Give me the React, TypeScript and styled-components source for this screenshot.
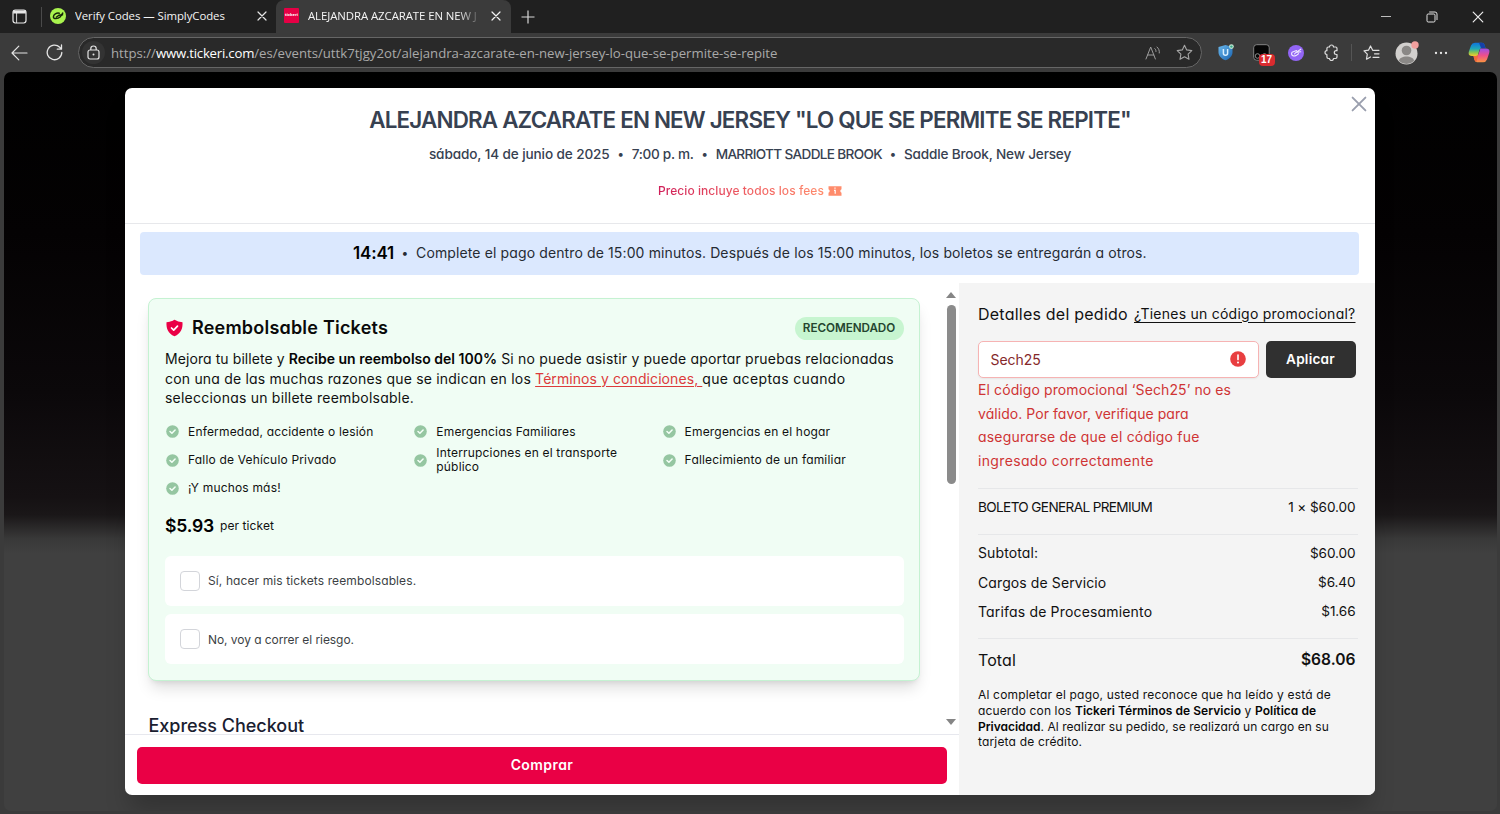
import React from 'react';
import styled, { createGlobalStyle } from 'styled-components';

const GlobalStyle = createGlobalStyle`
  *, *::before, *::after { box-sizing: border-box; }
  html, body { margin: 0; padding: 0; }
  body {
    background: #3b3b3b;
    color: #111;
    font-family: Inter, "Open Sans", sans-serif;
    font-feature-settings: "cv11";
    font-size: 13.6px;
    overflow: hidden;
  }
  svg { display: block; flex: none; }
`;

/* ---------- browser chrome ---------- */

const Browser = styled.div`
  display: flex;
  flex-direction: column;
  width: 1500px;
  height: 814px;
  background: #3b3b3b;
  overflow: hidden;
`;

const TabBar = styled.div`
  display: flex;
  align-items: center;
  height: 33px;
  flex: none;
  background: #202020;
  font-family: "Open Sans", sans-serif;
  color: #f4f4f4;
`;

const PanelButton = styled.div`
  width: 41px;
  padding-left: 12px;
`;

const TabDivider = styled.div`
  width: 1px;
  height: 20px;
  background: #4a4a4a;
`;

const Tab = styled.div<{ $active?: boolean; $width: number; $left: number }>`
  display: flex;
  align-items: center;
  height: 33px;
  width: ${p => p.$width}px;
  padding: 0 ${p => (p.$active ? 10 : 9)}px 2px ${p => p.$left}px;
  border-radius: 8px 8px 0 0;
  background: ${p => (p.$active ? '#3b3b3b' : 'transparent')};
`;

const TabTitle = styled.div<{ $fade?: boolean; $spacing: number }>`
  flex: 1;
  margin-left: 9px;
  overflow: hidden;
  white-space: nowrap;
  font-size: 11.4px;
  line-height: 18px;
  letter-spacing: ${p => p.$spacing}px;
  ${p => p.$fade && 'mask-image: linear-gradient(90deg, #000 150px, transparent 174px);'}
`;

const TickeriFavicon = styled.div`
  width: 15px;
  height: 15px;
  flex: none;
  border-radius: 1px;
  background: #e60045;
  color: #fff;
  font-size: 4px;
  font-weight: 700;
  line-height: 14px;
  text-align: center;
`;

const WindowControls = styled.div`
  display: flex;
  align-items: center;
  margin-left: auto;
  padding-right: 16px;
  gap: 34px;
`;

const Toolbar = styled.div`
  display: flex;
  align-items: center;
  height: 39px;
  flex: none;
  padding-left: 11px;
`;

const NavButtons = styled.div`
  display: flex;
  align-items: center;
  gap: 18px;
  width: 67px;
`;

const AddressBar = styled.div`
  display: flex;
  align-items: center;
  width: 1124px;
  height: 31px;
  padding: 0 8.5px 0 3px;
  border: 1px solid #666;
  border-radius: 16px;
  background: #292929;
  font-family: "Open Sans", sans-serif;
`;

const LockBadge = styled.div`
  display: grid;
  place-items: center;
  width: 23px;
  height: 23px;
  margin-right: 6px;
  border-radius: 50%;
  background: #333;
`;

const Url = styled.div`
  display: flex;
  flex: 1;
  font-size: 13.2px;
  line-height: 20px;
  white-space: nowrap;
  color: #a9a9a9;
`;

const UrlPart = styled.span<{ $host?: boolean; $spacing: number }>`
  letter-spacing: ${p => p.$spacing}px;
  ${p => p.$host && 'color: #fff;'}
`;

const AddressActions = styled.div`
  display: flex;
  align-items: center;
  gap: 15px;
`;

const Extensions = styled.div`
  display: flex;
  align-items: center;
  gap: 18.5px;
  margin-left: 16px;
`;

const ProfileTools = styled.div`
  display: flex;
  align-items: center;
  gap: 15px;
`;

const CopilotSlot = styled.div`
  margin-left: 5px;
`;

const CountedExtension = styled.div`
  position: relative;
`;

const CountBadge = styled.span`
  position: absolute;
  left: 6px;
  top: 10px;
  width: 16px;
  height: 12px;
  border-radius: 4px;
  background: #d92b2f;
  color: #fff;
  font: 700 10px/12px "Liberation Sans", sans-serif;
  text-align: center;
`;

const ToolbarDivider = styled.div`
  width: 1px;
  height: 17px;
  margin: 0 11px;
  background: #555;
`;

/* ---------- page and modal ---------- */

const Viewport = styled.div`
  display: flex;
  justify-content: center;
  align-items: flex-start;
  height: 739px;
  margin: 0 3px 0 4px;
  padding: 16px 1px 0 0;
  border-radius: 7px;
  overflow: hidden;
  background: linear-gradient(180deg, #000 0, #040203 160px, #0b080a 320px, #151113 425px, #1a1718 443px, #393939 467px, #404040 482px, #404040 100%);
`;

const Modal = styled.div`
  position: relative;
  display: flex;
  flex-direction: column;
  width: 1250px;
  height: 707.4px;
  border-radius: 7px;
  overflow: hidden;
  background: #fff;
  box-shadow: 0 20px 25px -5px rgba(0, 0, 0, 0.22);
`;

const CloseButton = styled.button`
  position: absolute;
  top: 8px;
  right: 8px;
  padding: 0;
  border: 0;
  background: none;
`;

const Header = styled.header`
  display: flex;
  flex-direction: column;
  align-items: center;
  height: 136px;
  flex: none;
  padding-top: 16px;
  border-bottom: 1px solid #e7e8eb;
  color: #374151;
  white-space: nowrap;
`;

const Title = styled.h1`
  margin: 0;
  font-size: 22.4px;
  font-weight: 600;
  line-height: 32px;
  letter-spacing: -0.81px;
`;

const Meta = styled.div`
  display: flex;
  margin-top: 8px;
  font-weight: 500;
  line-height: 20px;
`;

const MetaItem = styled.span<{ $spacing: number }>`
  letter-spacing: ${p => p.$spacing}px;
`;

const Dot = styled.span<{ $width: number }>`
  width: ${p => p.$width}px;
  text-align: center;
  font-size: 12px;
`;

const FeeNote = styled.div`
  display: flex;
  align-items: center;
  gap: 4px;
  margin-top: 18px;
  font-size: 12px;
  font-weight: 500;
  line-height: 18px;
  letter-spacing: 0.064px;
`;

const FeeText = styled.span`
  color: transparent;
  background: linear-gradient(90deg, #cf1d58, #f06062 55%, #ff8c6c);
  background-clip: text;
  -webkit-background-clip: text;
`;

const Timer = styled.div`
  display: flex;
  align-items: center;
  justify-content: center;
  height: 43px;
  flex: none;
  margin: 8px 15.6px 8px 15.4px;
  padding-bottom: 2px;
  border-radius: 4px;
  background: #dbe8fe;
  color: #262b33;
  font-size: 14px;
  letter-spacing: 0.122px;
  white-space: nowrap;
`;

const Countdown = styled.span`
  color: #000;
  font-size: 17px;
  font-weight: 600;
  letter-spacing: -0.18px;
`;

const Columns = styled.div`
  display: flex;
  flex: 1;
  min-height: 0;
`;

const Main = styled.main`
  display: flex;
  flex-direction: column;
  width: 834px;
`;

const ScrollRow = styled.div`
  display: flex;
  height: 452px;
  flex: none;
  overflow: hidden;
  border-bottom: 1px solid #e7e8ee;
`;

const ScrollContent = styled.div`
  width: 818px;
  padding: 15px 23px 0;
`;

const Scrollbar = styled.div`
  display: flex;
  flex-direction: column;
  align-items: center;
  width: 16px;
  padding: 9px 0 9px;
`;

const Thumb = styled.div`
  width: 9px;
  height: 179px;
  margin: 7px 0 auto;
  border-radius: 5px;
  background: #8b8b8b;
`;

const RefundCard = styled.section`
  height: 383px;
  padding: 15px 15.5px 0 16px;
  border: 1px solid #c5f2d2;
  border-radius: 8px;
  background: #f0fdf4;
  box-shadow: 0 10px 15px -3px rgba(0, 0, 0, 0.13), 0 4px 6px -4px rgba(0, 0, 0, 0.12);
`;

const CardHead = styled.div`
  display: flex;
  align-items: center;
  height: 28px;
`;

const CardTitle = styled.h2`
  margin: 0 auto 0 9px;
  color: #0a0a0a;
  font-size: 18px;
  font-weight: 600;
  line-height: 26px;
  letter-spacing: 0.21px;
`;

const Pill = styled.span`
  width: 109px;
  height: 23px;
  margin-top: 1px;
  border-radius: 12px;
  background: #c7f5d0;
  color: #24452f;
  font-size: 11.7px;
  font-weight: 600;
  line-height: 23px;
  letter-spacing: -0.06px;
  text-align: center;
`;

const Pitch = styled.p`
  margin: 7px 0 0;
  font-size: 14px;
  line-height: 19.5px;
  white-space: nowrap;
`;

const Line = styled.span<{ $spacing?: number }>`
  display: block;
  letter-spacing: ${p => p.$spacing ?? 0}px;
`;

const Run = styled.span<{ $spacing: number }>`
  letter-spacing: ${p => p.$spacing}px;
`;

const Strong = styled.b<{ $spacing: number }>`
  font-weight: 600;
  color: #050505;
  letter-spacing: ${p => p.$spacing}px;
`;

const TermsLink = styled.a`
  color: #dc3b3b;
  text-decoration: underline;
  text-underline-offset: 2px;
  letter-spacing: 0.08px;
`;

const Reasons = styled.ul`
  display: grid;
  grid-template-columns: repeat(3, 248.3px);
  grid-auto-rows: 28.2px;
  margin: 10.3px 0 0;
  padding: 0;
  list-style: none;
  font-size: 12px;
  line-height: 14px;
  letter-spacing: 0.18px;
`;

const Reason = styled.li`
  display: flex;
  align-items: center;
  gap: 9px;
  padding: 0 20px 0 1px;
`;

const Price = styled.div`
  display: flex;
  align-items: center;
  height: 26px;
  margin-top: 9.7px;
  font-size: 12px;
  letter-spacing: 0.08px;
`;

const Amount = styled.span`
  width: 55px;
  color: #000;
  font-size: 17.6px;
  font-weight: 600;
  letter-spacing: -0.19px;
`;

const Options = styled.div`
  display: flex;
  flex-direction: column;
  gap: 8.5px;
  margin-top: 17.5px;
`;

const Option = styled.label<{ $spacing: number }>`
  display: flex;
  align-items: center;
  gap: 8px;
  height: 50px;
  padding-left: 15px;
  border-radius: 6px;
  background: #fff;
  color: #3c3f44;
  font-size: 12px;
  letter-spacing: ${p => p.$spacing}px;
`;

const CheckBox = styled.span`
  width: 20px;
  height: 20px;
  border: 1px solid #d3d5da;
  border-radius: 4px;
  background: #fff;
`;

const ExpressTitle = styled.h2`
  margin: 32px 0 0 0.5px;
  color: #1a2030;
  font-size: 18px;
  font-weight: 500;
  line-height: 26px;
  letter-spacing: -0.02px;
`;

const Footer = styled.div`
  padding: 12px 12px 0;
`;

const BuyButton = styled.button`
  display: block;
  width: 810px;
  height: 36.5px;
  padding: 0 0 2px;
  border: 0;
  border-radius: 5px;
  background: #ea0045;
  color: #fff;
  font: inherit;
  font-size: 14px;
  font-weight: 600;
  letter-spacing: 0.43px;
`;

/* ---------- order summary ---------- */

const Summary = styled.aside`
  flex: 1;
  padding: 20px 17px 0 19px;
  background: #f4f4f4;
  white-space: nowrap;
`;

const SummaryHead = styled.div`
  display: flex;
  align-items: center;
  justify-content: space-between;
  height: 22px;
  padding-right: 2.5px;
  color: #111;
  font-size: 16px;
  letter-spacing: 0.23px;
`;

const PromoLink = styled.a`
  padding-bottom: 2px;
  font-size: 14px;
  letter-spacing: 0.245px;
  text-decoration: underline;
  text-underline-offset: 2.5px;
`;

const PromoForm = styled.div`
  display: flex;
  gap: 6.5px;
  height: 37px;
  margin-top: 16px;
`;

const PromoField = styled.div`
  display: flex;
  align-items: center;
  justify-content: space-between;
  width: 281px;
  padding: 0 12px 1px 11.5px;
  border: 1px solid #f6b3b3;
  border-radius: 5px;
  background: #fff;
  box-shadow: 0 1px 2px rgba(0, 0, 0, 0.06);
  color: #85282b;
  font-size: 14px;
  letter-spacing: -0.06px;
`;

const ApplyButton = styled.button`
  width: 90px;
  padding: 0 0 2px;
  border: 0;
  border-radius: 5px;
  background: #303030;
  color: #fff;
  font: inherit;
  font-weight: 600;
  letter-spacing: 0.24px;
`;

const PromoError = styled.p`
  margin: 0.3px 0 15.7px;
  color: #cf3434;
  font-size: 14px;
  line-height: 23.45px;
`;

const Rows = styled.div<{ $height: number; $pad: number }>`
  display: flex;
  flex-direction: column;
  height: ${p => p.$height}px;
  padding: ${p => p.$pad}px 2.5px 0 0;
  border-top: 1px solid #e6e7e9;
`;

const SumRow = styled.div`
  display: flex;
  align-items: center;
  justify-content: space-between;
  height: 29.4px;
`;

const Label = styled.span<{ $spacing?: number; $size?: number }>`
  font-size: ${p => p.$size ?? 14}px;
  letter-spacing: ${p => p.$spacing ?? 0.1}px;
`;

const Value = styled.span<{ $total?: boolean }>`
  font-size: ${p => (p.$total ? 15.6 : 13.6)}px;
  font-weight: ${p => (p.$total ? 600 : 400)};
  letter-spacing: ${p => (p.$total ? 0 : -0.1)}px;
`;

const Legal = styled.p`
  margin: 0;
  font-size: 12px;
  line-height: 15.7px;
`;

/* ---------- icons ---------- */

const Cross = ({ size, color, width = 1.2 }: { size: number; color: string; width?: number }) => (
  <svg width={size} height={size} viewBox="0 0 10 10" stroke={color} strokeWidth={width} strokeLinecap="round">
    <path d="M1 1l8 8M9 1L1 9" />
  </svg>
);

const CheckCircle = () => (
  <svg width="13" height="13" viewBox="0 0 13 13">
    <circle cx="6.5" cy="6.5" r="6.3" fill="#95c6a1" />
    <path d="M4 6.5l1.9 1.8L9.1 5" fill="none" stroke="#f5fff8" strokeWidth="1.5" strokeLinecap="round" strokeLinejoin="round" />
  </svg>
);

const reasons = [
  'Enfermedad, accidente o lesión',
  'Emergencias Familiares',
  'Emergencias en el hogar',
  'Fallo de Vehículo Privado',
  'Interrupciones en el transporte público',
  'Fallecimiento de un familiar',
  '¡Y muchos más!',
];

function BrowserTabs() {
  return (
    <TabBar>
      <PanelButton>
        <svg width="15" height="15" viewBox="0 0 15 15" fill="none" stroke="#e8e8e8" strokeWidth="1.2">
          <rect x="1" y="1" width="13" height="13" rx="2.4" />
          <path d="M1.2 3h12.6" strokeWidth="3" />
          <path d="M4.6 4v10" strokeWidth=".9" />
        </svg>
      </PanelButton>
      <TabDivider />
      <Tab $width={234} $left={8}>
        <svg width="16" height="16" viewBox="0 0 16 16">
          <circle cx="8" cy="8" r="8" fill="#a9f34e" />
          <g fill="none" stroke="#16240a" strokeWidth="1.4" strokeLinecap="round">
            <path d="M9.3 5.2C6.5 4.6 3.5 6.5 3.4 8.9c0 2.4 4.5 2.2 6.7.2L12.8 5" />
            <path d="M12.6 6.8L9 7.2 6.2 9.2" />
          </g>
        </svg>
        <TabTitle $spacing={-0.06}>Verify Codes — SimplyCodes</TabTitle>
        <Cross size={10} color="#e6e6e6" />
      </Tab>
      <Tab $active $width={235} $left={8}>
        <TickeriFavicon>tickeri</TickeriFavicon>
        <TabTitle $fade $spacing={-0.08}>ALEJANDRA AZCARATE EN NEW J</TabTitle>
        <Cross size={10} color="#f4f4f4" />
      </Tab>
      <svg width="36" height="14" viewBox="0 0 36 14" stroke="#d8d8d8" strokeWidth="1.2">
        <path d="M17 .5v13M10.5 7h13" />
      </svg>
      <WindowControls>
        <svg width="12" height="12" viewBox="0 0 12 12" stroke="#bdbdbd"><path d="M1 5.5h10" /></svg>
        <svg width="12" height="12" viewBox="0 0 12 12" fill="none" stroke="#e2e2e2">
          <rect x="1" y="3" width="8" height="8" rx="1.2" />
          <path d="M3.2 1H9a2 2 0 0 1 2 2v6" />
        </svg>
        <Cross size={12} color="#eee" width={1} />
      </WindowControls>
    </TabBar>
  );
}

function BrowserToolbar() {
  return (
    <Toolbar>
      <NavButtons>
        <svg width="17" height="16" viewBox="0 0 17 16" fill="none" stroke="#e4e4e4" strokeWidth="1.2" strokeLinecap="round" strokeLinejoin="round">
          <path d="M16 8H1M7.8 1.2L1 8l6.8 6.8" />
        </svg>
        <svg width="17" height="17" viewBox="0 0 17 17" fill="none" stroke="#e4e4e4" strokeWidth="1.3" strokeLinecap="round" strokeLinejoin="round">
          <path d="M15.8 8.5a7.3 7.3 0 1 1-2.1-5.2L15.3 5M15.5 1v4.2h-4.2" />
        </svg>
      </NavButtons>
      <AddressBar>
        <LockBadge>
          <svg width="13" height="15" viewBox="0 0 13 15" fill="none" stroke="#e4e4e4" strokeWidth="1.2">
            <rect x="1" y="5" width="11" height="9" rx="2" />
            <path d="M3.8 5V3.7a2.7 2.7 0 0 1 5.4 0V5" />
            <circle cx="6.5" cy="9.5" r="1" fill="#e4e4e4" stroke="none" />
          </svg>
        </LockBadge>
        <Url>
          <UrlPart $spacing={-0.01}>https://</UrlPart>
          <UrlPart $host $spacing={-0.21}>www.tickeri.com</UrlPart>
          <UrlPart $spacing={-0.01}>/es/events/uttk7tjgy2ot/alejandra-azcarate-en-new-jersey-lo-que-se-permite-se-repite</UrlPart>
        </Url>
        <AddressActions>
          <svg width="16" height="14" viewBox="0 0 16 14" fill="none" stroke="#9d9d9d" strokeLinecap="round">
            <path d="M1 13L5.7 1l4.7 12M2.6 9h6.2M9.8 2.6c.9.8 1.3 1.7 1.2 2.9M12 1c1.7 1.5 2.6 3.5 2.3 6" />
          </svg>
          <svg width="17" height="17" viewBox="0 0 17 17" fill="none" stroke="#a5a5a5" strokeWidth="1.1" strokeLinejoin="round">
            <path d="M8.5 1.2l2.2 4.7 5.1.7-3.7 3.6.9 5.1-4.5-2.5-4.5 2.5.9-5.1L1.2 6.6l5.1-.7z" />
          </svg>
        </AddressActions>
      </AddressBar>
      <Extensions>
        <svg width="16" height="17" viewBox="0 0 16 17">
          <defs>
            <linearGradient id="shieldBlue" x1="0" y1="0" x2="1" y2="1">
              <stop offset="0" stopColor="#6bb9ee" /><stop offset="1" stopColor="#1761ae" />
            </linearGradient>
          </defs>
          <path d="M7.5 1L14.5 3v5c0 4-2.8 6.7-7 8.3C3.3 14.7.5 12 .5 8V3z" fill="url(#shieldBlue)" />
          <path d="M5.4 5v4.2c0 2.7 4.2 2.7 4.2 0V5" fill="none" stroke="#d7efff" strokeWidth="1.5" />
          <circle cx="13.4" cy="2.6" r="2.4" fill="#c4e8d4" />
          <circle cx="13.4" cy="2.6" r="1.2" fill="#3aa886" />
        </svg>
        <CountedExtension>
          <svg width="17" height="17" viewBox="0 0 17 17">
            <rect x=".7" y=".7" width="15.5" height="15.5" rx="3" fill="#050505" stroke="#999" strokeWidth=".8" />
            <circle cx="4.5" cy="12" r="2.3" fill="none" stroke="#aaa" strokeWidth=".8" />
            <circle cx="11.5" cy="12" r="2.3" fill="none" stroke="#aaa" strokeWidth=".8" />
          </svg>
          <CountBadge>17</CountBadge>
        </CountedExtension>
        <svg width="16" height="16" viewBox="0 0 16 16">
          <circle cx="8" cy="8" r="8" fill="#9265f5" />
          <path d="M8.5 5.5L4 7.3c-1.5 3 1.5 4.5 4 3.3l2.5-1.9M12.8 4.2L8 7.4l4.8-.6M7.8 7.5L6.6 8.8" fill="none" stroke="#f0e9ff" strokeWidth="1.1" strokeLinecap="round" strokeLinejoin="round" />
        </svg>
        <svg width="17" height="17" viewBox="0 0 17 17" fill="none" stroke="#dedede" strokeWidth="1.2" strokeLinejoin="round">
          <path d="M5.3 3h1.2a2 2 0 0 1 4 0h2.1q1.4 0 1.4 1.4v2.3h-.8a1.9 1.9 0 0 0 0 3.800h.8v2.600q0 1.400-1.400 1.400h-2.100a2 2 0 0 1-4 0H5.300q-1.400 0-1.400-1.400v-2.600a1.900 1.900 0 0 1 0-3.800V4.400Q3.900 3 5.300 3z" />
        </svg>
      </Extensions>
      <ToolbarDivider />
      <ProfileTools>
        <svg width="17" height="16" viewBox="0 0 17 16" fill="none" stroke="#e0e0e0" strokeWidth="1.2" strokeLinejoin="round" strokeLinecap="round">
          <path d="M9.7 5.3L7.5 1 5.5 5.2 1 5.9l3.3 3.3-.8 5 4-2.2M9.7 5.3H16M11.5 8.8H16M10 12.3h6" />
        </svg>
        <svg width="24" height="24" viewBox="0 0 24 24">
          <circle cx="11.5" cy="12.5" r="11" fill="#d2d0ce" />
          <circle cx="11.5" cy="9.5" r="4.8" fill="#8a8886" />
          <path d="M4 20c0-6 15-6 15 0a11 11 0 0 1-15 0z" fill="#8a8886" />
          <circle cx="20" cy="4" r="3.7" fill="#f2a09e" />
        </svg>
        <svg width="14" height="4" viewBox="0 0 14 4" fill="#e8e8e8">
          <circle cx="2" cy="2" r="1.15" /><circle cx="7" cy="2" r="1.15" /><circle cx="12" cy="2" r="1.15" />
        </svg>
        <CopilotSlot>
          <svg width="22" height="21" viewBox="0 0 22 21">
            <defs>
              <linearGradient id="copilotLeft" x1="0" y1="0" x2="0" y2="1">
                <stop offset="0" stopColor="#0f74dc" /><stop offset=".45" stopColor="#1fa8b8" /><stop offset=".7" stopColor="#7cc25a" /><stop offset="1" stopColor="#f5cc2a" />
              </linearGradient>
              <linearGradient id="copilotRight" x1="0" y1="0" x2="0" y2="1">
                <stop offset="0" stopColor="#9a4fe8" /><stop offset=".5" stopColor="#ee4f8c" /><stop offset="1" stopColor="#fb9440" />
              </linearGradient>
            </defs>
            <path d="M7 .8h7q2 0 2.7 2.4l.8 2.8H14q-2 0-2.6 2L9.700 14H4Q-.3 14 .9 9.500L3 3.500Q4 .8 7 .8z" fill="url(#copilotLeft)" />
            <path d="M11 .8h3q2 0 2.700 2.400l.8 2.800h-4.500z" fill="#1640a8" />
            <path d="M15 20.200H9q-2 0-2.600-2.400L5.500 14H8q2 0 2.600-2l1.800-5.500H18q4.300 0 3.200 4.500L19 17.500q-1 2.700-4 2.700z" fill="url(#copilotRight)" />
            <path d="M5.500 14H8q2 0 2.600-2l-2.200 8.100q-1.500-.3-2-2.300z" fill="#f26a3c" />
          </svg>
        </CopilotSlot>
      </ProfileTools>
    </Toolbar>
  );
}

function RefundOffer() {
  return (
    <RefundCard>
      <CardHead>
        <svg width="18" height="18" viewBox="0 0 18 18">
          <path d="M9.5.8Q13 3 17.500 3.200C17.900 9.500 16 14.500 9.500 17.200 3 14.500 1.100 9.500 1.500 3.200 6 3 9.500.8 9.500.8z" fill="#ea0045" />
          <path d="M6.500 9l2.200 2.100L12.500 7.200" fill="none" stroke="#fff" strokeWidth="1.700" strokeLinecap="round" strokeLinejoin="round" />
        </svg>
        <CardTitle>Reembolsable Tickets</CardTitle>
        <Pill>RECOMENDADO</Pill>
      </CardHead>
      <Pitch>
        <Line $spacing={0.205}><Run $spacing={0.08}>Mejora tu billete y </Run><Strong $spacing={0.01}>Recibe un reembolso del 100%</Strong><Run $spacing={0.185}> Si no puede asistir y puede aportar pruebas relacionadas</Run></Line>
        <Line $spacing={0.195}>con una de las muchas razones que se indican en los <TermsLink>Términos y condiciones, </TermsLink><Run $spacing={0.36}>que aceptas cuando</Run></Line>
        <Line $spacing={0.22}>seleccionas un billete reembolsable.</Line>
      </Pitch>
      <Reasons>
        {reasons.map(r => (
          <Reason key={r}><CheckCircle /><span>{r}</span></Reason>
        ))}
      </Reasons>
      <Price><Amount>$5.93</Amount>per ticket</Price>
      <Options>
        <Option $spacing={0.11}><CheckBox />Sí, hacer mis tickets reembolsables.</Option>
        <Option $spacing={-0.06}><CheckBox />No, voy a correr el riesgo.</Option>
      </Options>
    </RefundCard>
  );
}

function OrderSummary() {
  return (
    <Summary>
      <SummaryHead>
        <span>Detalles del pedido</span>
        <PromoLink>¿Tienes un código promocional?</PromoLink>
      </SummaryHead>
      <PromoForm>
        <PromoField>
          Sech25
          <svg width="16" height="16" viewBox="0 0 16 16">
            <circle cx="8" cy="8" r="7.8" fill="#e83e40" />
            <path d="M8 4v4.6" stroke="#fff" strokeWidth="1.6" strokeLinecap="round" />
            <circle cx="8" cy="11.6" r="1" fill="#fff" />
          </svg>
        </PromoField>
        <ApplyButton>Aplicar</ApplyButton>
      </PromoForm>
      <PromoError>
        <Line $spacing={0.1}>El código promocional ‘Sech25’ no es</Line>
        <Line $spacing={0.05}>válido. Por favor, verifique para</Line>
        <Line $spacing={0.2}>asegurarse de que el código fue</Line>
        <Line $spacing={0.35}>ingresado correctamente</Line>
      </PromoError>
      <Rows $height={46} $pad={4}>
        <SumRow><Label $size={13.6} $spacing={-0.63}>BOLETO GENERAL PREMIUM</Label><Value>1 × $60.00</Value></SumRow>
      </Rows>
      <Rows $height={104} $pad={3.2}>
        <SumRow><Label>Subtotal:</Label><Value>$60.00</Value></SumRow>
        <SumRow><Label>Cargos de Servicio</Label><Value>$6.40</Value></SumRow>
        <SumRow><Label $spacing={0.17}>Tarifas de Procesamiento</Label><Value>$1.66</Value></SumRow>
      </Rows>
      <Rows $height={49.5} $pad={6.4}>
        <SumRow><Label $size={16}>Total</Label><Value $total>$68.06</Value></SumRow>
      </Rows>
      <Legal>
        <Line $spacing={0.18}>Al completar el pago, usted reconoce que ha leído y está de</Line>
        <Line $spacing={0.13}>acuerdo con los <Strong $spacing={0.04}>Tickeri Términos de Servicio</Strong> y <Strong $spacing={0.04}>Política de</Strong></Line>
        <Line $spacing={0.06}><Strong $spacing={-0.02}>Privacidad</Strong>. Al realizar su pedido, se realizará un cargo en su</Line>
        <Line $spacing={0.17}>tarjeta de crédito.</Line>
      </Legal>
    </Summary>
  );
}

export default function App() {
  return (
    <>
      <GlobalStyle />
      <Browser>
        <BrowserTabs />
        <BrowserToolbar />
        <Viewport>
          <Modal>
            <Header>
              <Title>ALEJANDRA AZCARATE EN NEW JERSEY "LO QUE SE PERMITE SE REPITE"</Title>
              <Meta>
                <MetaItem $spacing={-0.12}>sábado, 14 de junio de 2025</MetaItem>
                <Dot $width={22}>•</Dot>
                <MetaItem $spacing={-0.28}>7:00 p. m.</MetaItem>
                <Dot $width={22}>•</Dot>
                <MetaItem $spacing={-0.66}>MARRIOTT SADDLE BROOK</MetaItem>
                <Dot $width={22}>•</Dot>
                <MetaItem $spacing={-0.18}>Saddle Brook, New Jersey</MetaItem>
              </Meta>
              <FeeNote>
                <FeeText>Precio incluye todos los fees</FeeText>
                <svg width="14" height="10" viewBox="0 0 14 10">
                  <path d="M.5.3h13v3a1.8 1.8 0 0 0 0 3.4v3H.5v-3a1.8 1.8 0 0 0 0-3.4z" fill="#ff8c6c" />
                  <path d="M7 1.500v1.300M6 4.300h1.200v3.400" fill="none" stroke="#fff" strokeWidth="1.2" />
                </svg>
              </FeeNote>
            </Header>
            <CloseButton aria-label="Cerrar"><Cross size={16} color="#9a9fae" width={1.2} /></CloseButton>
            <Timer>
              <Countdown>14:41</Countdown>
              <Dot $width={22}>•</Dot>
              Complete el pago dentro de 15:00 minutos. Después de los 15:00 minutos, los boletos se entregarán a otros.
            </Timer>
            <Columns>
              <Main>
                <ScrollRow>
                  <ScrollContent>
                    <RefundOffer />
                    <ExpressTitle>Express Checkout</ExpressTitle>
                  </ScrollContent>
                  <Scrollbar>
                    <svg width="10" height="6" viewBox="0 0 10 6" fill="#858585"><path d="M5 0l5 6H0z" /></svg>
                    <Thumb />
                    <svg width="10" height="6" viewBox="0 0 10 6" fill="#858585"><path d="M5 6L0 0h10z" /></svg>
                  </Scrollbar>
                </ScrollRow>
                <Footer><BuyButton>Comprar</BuyButton></Footer>
              </Main>
              <OrderSummary />
            </Columns>
          </Modal>
        </Viewport>
      </Browser>
    </>
  );
}
